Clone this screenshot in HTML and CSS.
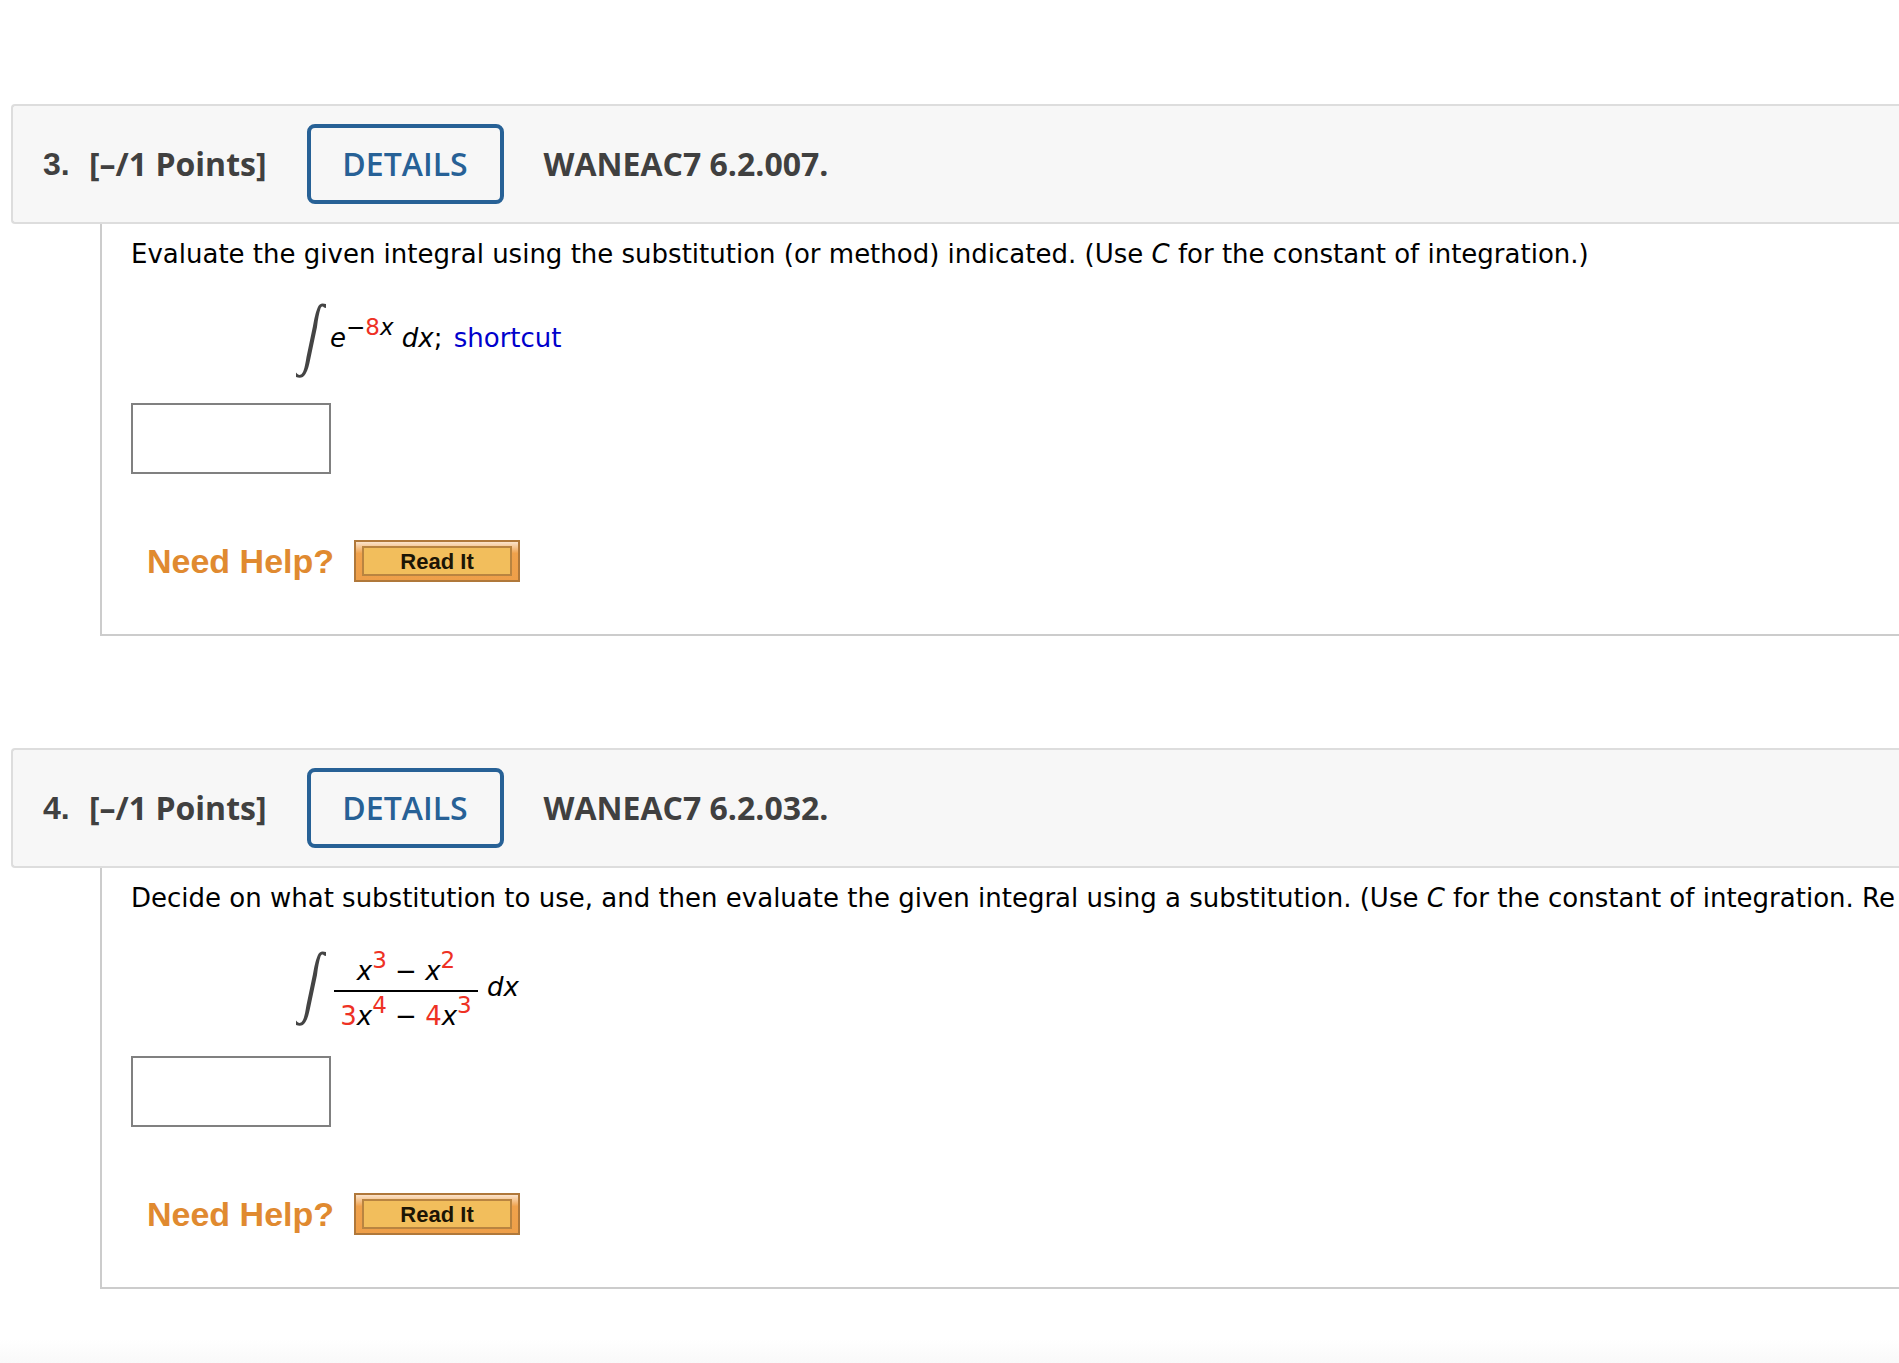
FILE: index.html
```html
<!DOCTYPE html>
<html lang="en">
<head>
<meta charset="utf-8">
<title>WANEAC7 6.2 Homework</title>
<link rel="stylesheet" href="styles.css">
</head>
<body>
<main class="assignment">
  <section class="question">
    <header class="question-header">
      <h2 class="question-number">3.</h2>
      <span class="points">[–/1 Points]</span>
      <button class="details" type="button">DETAILS</button>
      <span class="question-name">WANEAC7 6.2.007.</span>
    </header>
    <div class="question-body">
      <label class="prompt" for="answer-3">Evaluate the given integral using the substitution (or method) indicated. (Use <i>C</i> for the constant of integration.)</label>
      <div class="expression">
        <svg class="integral" viewBox="0 0 30 75" aria-label="integral" role="img"><path d="M30 1C26 0 23.500 0 21.500 5C19.500 10 18.500 15 17 23L10.500 54C9 63 8 68 6 70.500C4 73 2 72 0 69.500L0 74C4 75.500 7 75 9.500 71C12 67 13 62 14.500 55L21 24C22 16 23 10 24.500 5.500C25.500 3 27 3 28 4.500L30 5Z" fill="#444"/></svg>
        <span class="term"><i>e</i><sup>−<span class="value">8</span><i>x</i></sup> <i>dx</i>; <span class="hint">shortcut</span></span>
      </div>
      <input class="answer" id="answer-3" type="text">
      <div class="help">
        <span class="help-title">Need Help?</span>
        <button class="read-it" type="button"><span class="read-it-face">Read It</span></button>
      </div>
    </div>
  </section>
  <section class="question">
    <header class="question-header">
      <h2 class="question-number">4.</h2>
      <span class="points">[–/1 Points]</span>
      <button class="details" type="button">DETAILS</button>
      <span class="question-name">WANEAC7 6.2.032.</span>
    </header>
    <div class="question-body">
      <label class="prompt" for="answer-4">Decide on what substitution to use, and then evaluate the given integral using a substitution. (Use <i>C</i> for the constant of integration. Re</label>
      <div class="expression expression-tall">
        <svg class="integral" viewBox="0 0 30 75" aria-label="integral" role="img"><path d="M30 1C26 0 23.500 0 21.500 5C19.500 10 18.500 15 17 23L10.500 54C9 63 8 68 6 70.500C4 73 2 72 0 69.500L0 74C4 75.500 7 75 9.500 71C12 67 13 62 14.500 55L21 24C22 16 23 10 24.500 5.500C25.500 3 27 3 28 4.500L30 5Z" fill="#444"/></svg>
        <span class="fraction">
          <span class="numerator"><i>x</i><sup class="value">3</sup> − <i>x</i><sup class="value">2</sup></span>
          <span class="denominator"><span class="value">3</span><i>x</i><sup class="value">4</sup> − <span class="value">4</span><i>x</i><sup class="value">3</sup></span>
        </span>
        <i class="differential">dx</i>
      </div>
      <input class="answer" id="answer-4" type="text">
      <div class="help">
        <span class="help-title">Need Help?</span>
        <button class="read-it" type="button"><span class="read-it-face">Read It</span></button>
      </div>
    </div>
  </section>
</main>
<div class="page-fade"></div>
</body>
</html>
```
FILE: styles.css
```css
* {
  box-sizing: border-box;
}

body {
  display: flex;
  flex-direction: column;
  min-height: 100vh;
  margin: 0;
  overflow-x: hidden;
  background: #fff;
  color: #000;
  font: 26px/40px Verdana, "DejaVu Sans", sans-serif;
}

.assignment {
  display: flex;
  flex-direction: column;
  gap: 112px;
  padding: 104px 0 0 11px;
}

.question-header {
  display: flex;
  align-items: center;
  height: 120px;
  padding-left: 30px;
  border: 2px solid #ddd;
  border-right: 0;
  border-radius: 4px 0 0 4px;
  background: #f7f7f7;
  color: #404040;
  font: bold 32px/40px "Open Sans", sans-serif;
}

.question-number {
  width: 46px;
  margin: 0;
  font: bold 32px/40px "Liberation Sans", Arial, sans-serif;
}

.details {
  width: 197px;
  height: 80px;
  margin: 0 40px;
  padding: 0;
  border: 4px solid #276196;
  border-radius: 8px;
  background: transparent;
  color: #276196;
  font: 600 32px/40px "Open Sans", sans-serif;
}

.question-body {
  margin-left: 89px;
  padding: 10px 0 52px 29px;
  border: 2px solid #ccc;
  border-width: 0 0 2px 2px;
}

.prompt {
  display: block;
  white-space: nowrap;
}

.expression {
  display: flex;
  align-items: center;
  height: 76px;
  margin: 28px 0 25px 165px;
}

.expression-tall {
  height: 85px;
}

.integral {
  width: 30px;
  height: 75px;
}

.term {
  margin-left: 4px;
  padding-bottom: 4px;
}

.differential {
  padding-bottom: 4px;
}

sup {
  font-size: 23px;
  line-height: 0;
  vertical-align: 12px;
}

.value {
  color: #ee3124;
}

.hint {
  margin-left: 3px;
  color: #00c;
}

.fraction {
  display: flex;
  flex-direction: column;
  width: 144px;
  margin: 7px 9px 0 8px;
  text-align: center;
}

.numerator {
  border-bottom: 2px solid #000;
  line-height: 38px;
}

.denominator {
  padding-top: 8px;
  line-height: 32px;
}

.answer {
  display: block;
  width: 200px;
  height: 71px;
  padding: 0 8px;
  border: 2px solid #808080;
  border-radius: 0;
  background: #fff;
  font: inherit;
}

.help {
  display: flex;
  align-items: center;
  gap: 20px;
  margin: 66px 0 0 16px;
}

.help-title {
  color: #e08a30;
  font: bold 34px/40px "Liberation Sans", Arial, sans-serif;
}

.read-it {
  display: flex;
  width: 166px;
  height: 42px;
  padding: 4px 6px;
  border: 2px solid #b0783a;
  border-radius: 0;
  background: linear-gradient(#fbe3cb, #f0a24c 30%, #ee9f49);
}

.read-it-face {
  flex: 1;
  border: 2px solid #b98440;
  background: #f2be5c;
  color: #1c1505;
  font: bold 22px/28px "Liberation Sans", Arial, sans-serif;
}

.page-fade {
  height: 24px;
  margin-top: auto;
  background: linear-gradient(#fff, #f9f9f9);
}
```
